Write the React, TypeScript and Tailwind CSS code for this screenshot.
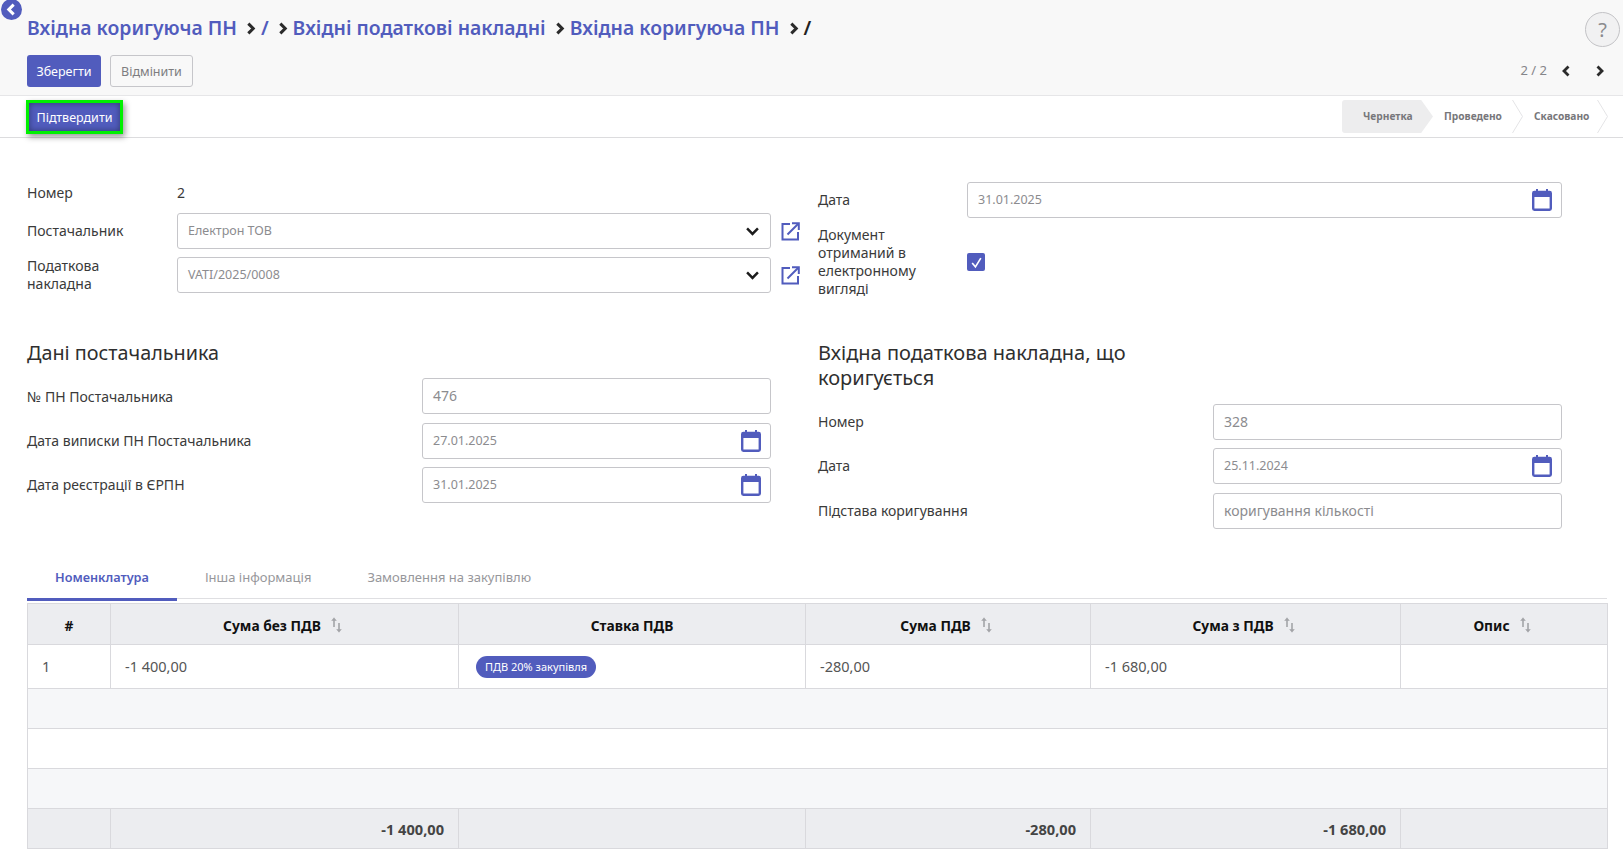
import type { ReactNode } from "react";

const FONT = "font-['Noto_Sans','Open_Sans',sans-serif]";

function Chevron({ dir = "right", className = "" }: { dir?: "left" | "right"; className?: string }) {
  return (
    <svg viewBox="0 0 10 12" className={className} fill="none" stroke="currentColor" strokeWidth="2.8">
      <path d={dir === "right" ? "M3 1.5 7.5 6 3 10.5" : "M7 1.5 2.5 6 7 10.5"} />
    </svg>
  );
}

function ExternalIcon() {
  return (
    <svg viewBox="0 0 19 19" className="h-[19px] w-[19px] text-[#515cbd]" fill="none" stroke="currentColor" strokeWidth="2">
      <path d="M9 2H1.5v15.5H17V10" />
      <path d="M6.5 12.5 17 2" />
      <path d="M11 1.2h6.8V8" />
    </svg>
  );
}

function CalendarIcon() {
  return (
    <svg viewBox="0 0 20 22" className="h-[22px] w-[20px] text-[#515cbd]">
      <rect x="1.2" y="3" width="17.6" height="17.8" rx="1.2" fill="none" stroke="currentColor" strokeWidth="2.4" />
      <rect x="1" y="3" width="18" height="5" fill="currentColor" />
      <rect x="4" y="0" width="2" height="4" fill="currentColor" />
      <rect x="14" y="0" width="2" height="4" fill="currentColor" />
    </svg>
  );
}

function SortIcon() {
  return (
    <svg viewBox="0 0 11 16" className="ml-[10px] mt-[-2px] h-[16px] w-[11px] text-[#a3a4a8]" fill="none" stroke="currentColor">
      <path d="M3 10V2" strokeWidth="1.6" />
      <path d="M.6 3.8 3 .8l2.4 3" fill="currentColor" strokeWidth="0.6" />
      <path d="M8 6v8" strokeWidth="1.6" />
      <path d="M5.6 12.2 8 15.2l2.4-3" fill="currentColor" strokeWidth="0.6" />
    </svg>
  );
}

function Field({ width, text, big, right }: { width: string; text: string; big?: boolean; right?: ReactNode }) {
  return (
    <div className={`${width} flex h-[36px] items-center justify-between rounded-[3px] border border-[#c6c6ca] pl-[10px] pr-[9px] ${big ? "text-[14px]" : "text-[12.5px]"} text-[#8c8c8f]`}>
      <span className={big ? "pb-[2px]" : ""}>{text}</span>
      {right}
    </div>
  );
}

function SelectChevron() {
  return (
    <svg viewBox="0 0 12 8" className="mr-[2px] h-[9px] w-[13px] text-[#1c1c1c]" fill="none" stroke="currentColor" strokeWidth="2.3">
      <path d="M1 1.2 6 6.2l5-5" />
    </svg>
  );
}

function Crumb({ children }: { children: ReactNode }) {
  return <span className="text-[#515cbd]">{children}</span>;
}

function Sep() {
  return <Chevron className="ml-[8px] mr-[5px] h-[13px] w-[11px] text-[#2b2b2b]" />;
}

function Step({ label, width, pad, active }: { label: string; width: string; pad: string; active?: boolean }) {
  return (
    <div className={`relative flex h-[33px] items-center ${width} ${pad}`}>
      {active ? (
        <div className="absolute inset-0 rounded-l-[3px] bg-[#ededee] [clip-path:polygon(0_0,87%_0,100%_50%,87%_100%,0_100%)]" />
      ) : (
        <svg viewBox="0 0 11 33" className="absolute right-0 top-0 h-[33px] w-[11px] text-[#e4e4e6]" fill="none" stroke="currentColor">
          <path d="M.5 0 10.5 16.5.5 33" />
        </svg>
      )}
      <span className="relative pt-[1px] text-[10.2px] font-bold text-[#77777b]">{label}</span>
    </div>
  );
}

const th = "border border-[#d9d9dd] bg-[#ecedf0] pt-[4px] text-[13.8px] font-bold text-[#111]";
const td = "border border-[#d9d9dd] px-[14px] text-[14.5px] text-[#555]";
const tf = "border border-[#d9d9dd] bg-[#ecedf0] px-[14px] pt-[2px] text-right text-[14.6px] font-bold text-[#444]";

function HeadCell({ label }: { label: string }) {
  return (
    <th className={th}>
      <div className="flex items-center justify-center pr-[4px]">
        {label}
        <SortIcon />
      </div>
    </th>
  );
}

export default function App() {
  return (
    <div className={`${FONT} relative min-h-screen overflow-hidden bg-white text-[14px] text-[#3a3a3a]`}>
      <div className="absolute left-[1px] top-[-1px] flex h-[21px] w-[21px] items-center justify-center rounded-full bg-[#515cbd]">
        <Chevron dir="left" className="h-[13px] w-[11px] text-white" />
      </div>

      <div className="h-[96px] border-b border-[#e6e6e8] bg-[#f8f8f8] px-[27px]">
        <div className="flex items-start justify-between">
          <div className="flex h-[28px] translate-y-[14px] items-center text-[19.35px] font-semibold leading-[28px]">
            <Crumb>Вхідна коригуюча ПН</Crumb>
            <Sep />
            <Crumb>/</Crumb>
            <Sep />
            <Crumb>Вхідні податкові накладні</Crumb>
            <Sep />
            <Crumb>Вхідна коригуюча ПН</Crumb>
            <Sep />
            <span className="text-[#222]">/</span>
          </div>
          <div className="mr-[-24px] mt-[12px] flex h-[35px] w-[35px] items-center justify-center rounded-full border border-[#c3c3c6] bg-[#f1f1f2] text-[20px] text-[#8b8b8e]">
            ?
          </div>
        </div>
        <div className="mt-[8px] flex items-center justify-between">
          <div className="flex gap-[9px]">
            <div className="flex h-[32px] w-[74px] items-center justify-center rounded-[3px] bg-[#515cbd] pt-[2px] text-[12.5px] text-white">Зберегти</div>
            <div className="flex h-[32px] w-[83px] items-center justify-center rounded-[3px] border border-[#c6c6ca] pt-[2px] text-[12.5px] text-[#7d7d80]">Відмінити</div>
          </div>
          <div className="mr-[-9px] flex items-center text-[#2b2b2b]">
            <span className="mr-[14px] text-[13px] text-[#85858a]">2 / 2</span>
            <Chevron dir="left" className="mr-[22px] h-[12px] w-[11px]" />
            <Chevron className="h-[12px] w-[11px]" />
          </div>
        </div>
      </div>

      <div className="flex h-[42px] items-center justify-between border-b border-[#dcdcde] pl-[26px] pr-[15px]">
        <div className="flex h-[34px] w-[97px] items-center justify-center border-[3px] border-[#00f000] bg-[#515cbd] pt-[3px] text-[12.5px] text-white shadow-[inset_0_0_6px_rgba(0,0,0,0.4),2px_3px_6px_rgba(0,0,0,0.4)]">
          Підтвердити
        </div>
        <div className="flex">
          <Step label="Чернетка" width="w-[91px]" pad="pl-[21px]" active />
          <Step label="Проведено" width="w-[90px]" pad="pl-[11px]" />
          <Step label="Скасовано" width="w-[85px]" pad="pl-[11px]" />
        </div>
      </div>

      <div className="px-[27px]">
        <div className="flex">
          <div className="w-[791px] pt-[45px]">
            <div className="flex h-[20px] items-center pb-[2px]">
              <div className="w-[150px]">Номер</div>
              <div>2</div>
            </div>
            <div className="mt-[10px] flex items-center">
              <div className="w-[150px] pb-[2px]">Постачальник</div>
              <Field width="w-[594px]" text="Електрон ТОВ" right={<SelectChevron />} />
              <div className="ml-[10px] flex"><ExternalIcon /></div>
            </div>
            <div className="mt-[8px] flex items-center">
              <div className="w-[150px] leading-[18px]">Податкова<br />накладна</div>
              <Field width="w-[594px]" text="VATI/2025/0008" right={<SelectChevron />} />
              <div className="ml-[10px] flex"><ExternalIcon /></div>
            </div>
            <div className="mt-[46px] text-[19.8px] leading-[28px] text-[#2f2f2f]">Дані постачальника</div>
            <div className="mt-[11px] flex items-center">
              <div className="w-[395px]">№ ПН Постачальника</div>
              <Field width="w-[349px]" big text="476" />
            </div>
            <div className="mt-[9px] flex items-center">
              <div className="w-[395px] pb-[2px]">Дата виписки ПН Постачальника</div>
              <Field width="w-[349px]" text="27.01.2025" right={<CalendarIcon />} />
            </div>
            <div className="mt-[8px] flex items-center">
              <div className="w-[395px] pb-[2px]">Дата реєстрації в ЄРПН</div>
              <Field width="w-[349px]" text="31.01.2025" right={<CalendarIcon />} />
            </div>
          </div>

          <div className="w-[744px] pt-[44px]">
            <div className="flex items-center">
              <div className="w-[149px] pb-[2px]">Дата</div>
              <Field width="w-[595px]" text="31.01.2025" right={<CalendarIcon />} />
            </div>
            <div className="mt-[8px] flex items-center">
              <div className="w-[149px] leading-[18px]">Документ<br />отриманий в<br />електронному<br />вигляді</div>
              <div className="flex h-[18px] w-[18px] items-center justify-center rounded-[2px] bg-[#515cbd]">
                <svg viewBox="0 0 12 12" className="h-[13px] w-[13px] text-white" fill="none" stroke="currentColor" strokeWidth="1.5">
                  <path d="M2 6.5 5 10l5-8" />
                </svg>
              </div>
            </div>
            <div className="mt-[42px] w-[340px] text-[20px] leading-[25px] text-[#2f2f2f]">Вхідна податкова накладна, що коригується</div>
            <div className="mt-[14px] flex items-center">
              <div className="w-[395px] pb-[2px]">Номер</div>
              <Field width="w-[349px]" big text="328" />
            </div>
            <div className="mt-[8px] flex items-center">
              <div className="w-[395px] pb-[2px]">Дата</div>
              <Field width="w-[349px]" text="25.11.2024" right={<CalendarIcon />} />
            </div>
            <div className="mt-[9px] flex items-center">
              <div className="w-[395px] pb-[2px]">Підстава коригування</div>
              <Field width="w-[349px]" big text="коригування кількості" />
            </div>
          </div>
        </div>

        <div className="mt-[26px] flex h-[44px] w-[1580px] items-start border-b border-[#dfdfe2] text-[13px]">
          <div className="flex h-[46px] items-center border-b-[3px] border-[#515cbd] px-[28px] pt-[3px] text-[12.7px] font-semibold text-[#515cbd]">Номенклатура</div>
          <div className="flex h-[46px] items-center px-[28px] pb-[1px] text-[#97979b]">Інша інформація</div>
          <div className="flex h-[46px] items-center px-[28px] pb-[1px] text-[#97979b]">Замовлення на закупівлю</div>
        </div>

        <table className="mt-[4px] w-[1580px] table-fixed border-collapse">
          <colgroup>
            <col className="w-[83px]" />
            <col className="w-[348px]" />
            <col className="w-[347px]" />
            <col className="w-[285px]" />
            <col className="w-[310px]" />
            <col className="w-[207px]" />
          </colgroup>
          <thead>
            <tr className="h-[41px]">
              <th className={th}>#</th>
              <HeadCell label="Сума без ПДВ" />
              <th className={th}>Ставка ПДВ</th>
              <HeadCell label="Сума ПДВ" />
              <HeadCell label="Сума з ПДВ" />
              <HeadCell label="Опис" />
            </tr>
          </thead>
          <tbody>
            <tr className="h-[44px]">
              <td className={td}>1</td>
              <td className={td}>-1 400,00</td>
              <td className="border border-[#d9d9dd] px-[17px]">
                <span className="inline-flex h-[22px] w-[120px] items-center justify-center rounded-full bg-[#515cbd] text-[11px] text-white">ПДВ 20% закупівля</span>
              </td>
              <td className={td}>-280,00</td>
              <td className={td}>-1 680,00</td>
              <td className={td}></td>
            </tr>
            <tr className="h-[40px] bg-[#f6f7f9]"><td colSpan={6} className="border border-[#d9d9dd]"></td></tr>
            <tr className="h-[40px]"><td colSpan={6} className="border border-[#d9d9dd]"></td></tr>
            <tr className="h-[40px] bg-[#f6f7f9]"><td colSpan={6} className="border border-[#d9d9dd]"></td></tr>
          </tbody>
          <tfoot>
            <tr className="h-[40px]">
              <td className={tf}></td>
              <td className={tf}>-1 400,00</td>
              <td className={tf}></td>
              <td className={tf}>-280,00</td>
              <td className={tf}>-1 680,00</td>
              <td className={tf}></td>
            </tr>
          </tfoot>
        </table>
      </div>
    </div>
  );
}
